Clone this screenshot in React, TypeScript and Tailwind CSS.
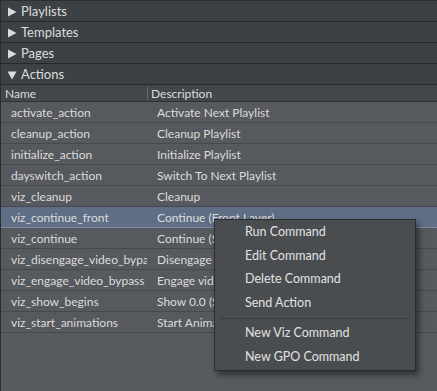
import { useState } from "react";

const sections = ["Playlists", "Templates", "Pages"];

const actions = [
  { name: "activate_action", desc: "Activate Next Playlist" },
  { name: "cleanup_action", desc: "Cleanup Playlist" },
  { name: "initialize_action", desc: "Initialize Playlist" },
  { name: "dayswitch_action", desc: "Switch To Next Playlist" },
  { name: "viz_cleanup", desc: "Cleanup" },
  { name: "viz_continue_front", desc: "Continue (Front Layer)" },
  { name: "viz_continue", desc: "Continue (Show Layer)" },
  { name: "viz_disengage_video_bypass", desc: "Disengage video bypass" },
  { name: "viz_engage_video_bypass", desc: "Engage video bypass" },
  { name: "viz_show_begins", desc: "Show 0.0 (Show Layer)" },
  { name: "viz_start_animations", desc: "Start Animations" },
];

const menu = [
  ["Run Command", "Edit Command", "Delete Command", "Send Action"],
  ["New Viz Command", "New GPO Command"],
];

function Arrow({ open = false }: { open?: boolean }) {
  return (
    <svg width="10" height="10" viewBox="0 0 10 10" className="shrink-0">
      {open ? (
        <polygon points="0.5,1.5 9.5,1.5 5,9.5" fill="#dcdcdc" />
      ) : (
        <polygon points="1,0.5 9.5,5 1,9.5" fill="#dcdcdc" />
      )}
    </svg>
  );
}

export default function App() {
  const [selected] = useState(5);

  return (
    <div
      className="relative h-[391px] w-[437px] overflow-hidden border-l border-t border-[#2c2f32] bg-[#575b5f] text-[12px] text-[#dcdcdc]"
      style={{ fontFamily: 'Lato, "Noto Sans", sans-serif' }}
    >
      {/* Collapsed sections */}
      {sections.map((s) => (
        <div
          key={s}
          className="flex h-[21px] items-center gap-[4px] border-b border-[#26292c] bg-[#3c4145] pl-[6px] pt-px text-[13px]"
        >
          <Arrow />
          <span>{s}</span>
        </div>
      ))}

      {/* Actions */}
      <div className="flex h-[21px] items-center gap-[4px] border-b border-[#26292c] bg-[#3c4145] pl-[6px] pt-px text-[13px]">
        <Arrow open />
        <span>Actions</span>
      </div>

      {/* Column header */}
      <div className="flex h-[17px] items-center border-b border-[#2f3235] bg-[#42474b] pt-px">
        <div className="w-[146px] pl-[4px]">Name</div>
        <div className="h-[13px] w-px bg-[#6a6e72]" />
        <div className="pl-[3px]">Description</div>
      </div>

      {/* Rows */}
      {actions.map((a, i) => (
        <div
          key={a.name}
          className={`flex h-[21px] items-center border-b pt-px ${
            i === selected
              ? "border-[#7d8ca0] bg-[#5f6e84]"
              : "border-[#45494d] bg-[#56595d]"
          }`}
        >
          <div className="w-[146px] shrink-0 overflow-hidden whitespace-nowrap pl-[10px]">
            {a.name}
          </div>
          <div className="overflow-hidden whitespace-nowrap pl-[10px]">
            {a.desc}
          </div>
        </div>
      ))}

      {/* Context menu */}
      <div className="absolute left-[213px] top-[218px] w-[202px] border border-[#2b2d2f] bg-[#4a4d50] py-[1px] text-[12.5px] shadow-[3px_4px_6px_rgba(0,0,0,0.45)]">
        {menu.map((group, gi) => (
          <div key={gi}>
            {gi > 0 && <div className="mx-[5px] my-[3px] h-px bg-[#393c3e]" />}
            {group.map((m) => (
              <div
                key={m}
                className="flex h-[23.5px] items-center pl-[30px] text-[#e2e2e2]"
              >
                {m}
              </div>
            ))}
          </div>
        ))}
      </div>
    </div>
  );
}
